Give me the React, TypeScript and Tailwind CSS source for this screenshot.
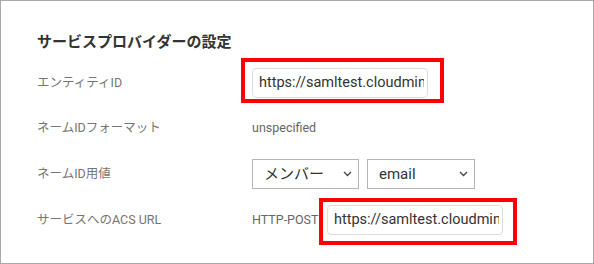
import React from "react";

const font = { fontFamily: "Roboto, 'Noto Sans CJK JP', sans-serif" };

function Chevron() {
  return (
    <svg width="9" height="6" viewBox="0 0 9 6" fill="none">
      <path d="M1 1l3.5 3.5L8 1" stroke="#444" strokeWidth="1.3" />
    </svg>
  );
}

function FakeSelect({ label, width }: { label: string; width: string }) {
  return (
    <div
      className={`${width} h-[30px] border border-[#b4b4b4] bg-white flex items-center justify-between pl-[11px] pr-[6px] text-[15px] text-[#333]`}
    >
      <span>{label}</span>
      <Chevron />
    </div>
  );
}

function TextBox() {
  return (
    <div className="w-[176px] h-[30px] border border-[#dcdcdc] rounded-[4px] bg-white flex items-center pl-[6px] pr-[3px] overflow-hidden">
      <span className="text-[14.5px] text-[#333] whitespace-nowrap overflow-hidden">
        https://samltest.cloudmin
      </span>
    </div>
  );
}

export default function App() {
  return (
    <div
      className="relative w-[594px] h-[264px] border border-[#a8a8a8] bg-white box-border overflow-hidden"
      style={font}
    >
      <div className="pl-[36px] pt-[30px]">
        <h2 className="text-[15px] font-bold text-[#333] leading-[22px] mb-[7px]">
          サービスプロバイダーの設定
        </h2>
        <div className="grid grid-cols-[215px_1fr] text-[12.5px] text-[#757575]">
          <div className="h-[46px] flex items-center">エンティティID</div>
          <div className="h-[46px] flex items-center">
            <TextBox />
          </div>
          <div className="h-[45px] flex items-center">ネームIDフォーマット</div>
          <div className="h-[45px] flex items-center text-[12.5px] text-[#666]">unspecified</div>
          <div className="h-[46px] flex items-center">ネームID用値</div>
          <div className="h-[46px] flex items-center gap-[8px]">
            <FakeSelect label="メンバー" width="w-[107px]" />
            <FakeSelect label="email" width="w-[108px]" />
          </div>
          <div className="h-[46px] flex items-center">サービスへのACS URL</div>
          <div className="h-[46px] flex items-center">
            <span className="w-[75px] text-[12.5px] text-[#666] whitespace-nowrap">HTTP-POST</span>
            <TextBox />
          </div>
        </div>
      </div>
      <div className="absolute left-[240px] top-[57px] w-[203px] h-[45px] border-[4px] border-[#ff0000]" />
      <div className="absolute left-[318px] top-[197px] w-[198px] h-[47px] border-[4px] border-[#ff0000]" />
    </div>
  );
}
